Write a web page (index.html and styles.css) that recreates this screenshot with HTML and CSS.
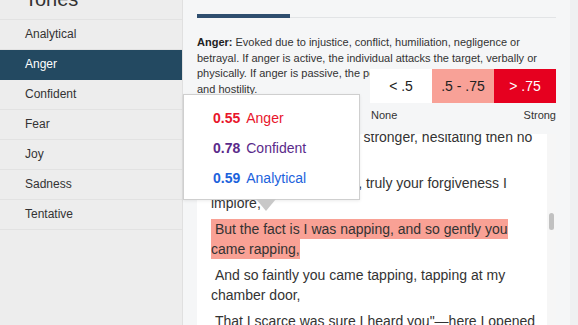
FILE: index.html
```html
<!DOCTYPE html>
<html lang="en">
<head>
  <meta charset="UTF-8">
  <meta name="viewport" content="width=device-width, initial-scale=1.0">
  <title>Tones</title>
  <link rel="stylesheet" href="styles.css">
</head>
<body>
<div class="app">
  <aside class="sidebar">
    <div class="sidebar-title"><h2>Tones</h2></div>
    <ul class="tone-list">
      <li>Analytical</li>
      <li class="active">Anger</li>
      <li>Confident</li>
      <li>Fear</li>
      <li>Joy</li>
      <li>Sadness</li>
      <li>Tentative</li>
    </ul>
  </aside>

  <main class="main">
    <div class="tabs"><div class="tab-active"></div></div>

    <p class="desc"><b>Anger:</b> Evoked due to injustice, conflict, humiliation, negligence or betrayal. If anger is active, the individual attacks the target, verbally or physically. If anger is passive, the person silently sulks and feels tension and hostility.</p>

    <!-- legend sits over the description -->
    <div class="legend">
      <div class="legend-scale">
        <span class="lv lv-low">&lt; .5</span>
        <span class="lv lv-mid">.5 - .75</span>
        <span class="lv lv-high">&gt; .75</span>
      </div>
      <div class="legend-labels"><span>None</span><span>Strong</span></div>
    </div>

    <div class="reader">
      <div class="reader-text">
        <p>&nbsp;Presently my soul grew stronger, hesitating then no longer,</p>
        <p>&nbsp;"Sir," said I, "or Madam, truly your forgiveness I implore,</p>
        <p><span class="hl">&nbsp;But the fact is I was napping, and so gently you came rapping,</span></p>
        <p>&nbsp;And so faintly you came tapping, tapping at my chamber door,</p>
        <p>&nbsp;That I scarce was sure I heard you"—here I opened wide the door;—</p>
        <p>&nbsp;Darkness there and nothing more.</p>
      </div>
      <div class="scrollbar"><div class="thumb"></div></div>
    </div>

    <div class="tooltip">
      <div class="tip-row anger"><b>0.55</b><span>Anger</span></div>
      <div class="tip-row confident"><b>0.78</b><span>Confident</span></div>
      <div class="tip-row analytical"><b>0.59</b><span>Analytical</span></div>
    </div>
  </main>

  <div class="edge"></div>
</div>
</body>
</html>
```

FILE: styles.css
```css
html, body {
  margin: 0;
  height: 325px;
  overflow: hidden;
}
body {
  font-family: "Liberation Sans", Arial, sans-serif;
  color: #333;
}
.app {
  display: flex;
  height: 325px;
}

/* sidebar */
.sidebar {
  width: 183px;
  flex: none;
  box-sizing: border-box;
  background: #ededed;
  border-right: 1px solid #e0e0e0;
}
.sidebar-title {
  height: 19px;
  overflow: hidden;
}
.sidebar-title h2 {
  margin: -11px 0 0 25px;
  font-size: 20px;
  line-height: 20px;
  font-weight: normal;
  color: #333;
}
.tone-list {
  list-style: none;
  margin: 0;
  padding: 0;
  border-top: 1px solid #e2e2e2;
}
.tone-list li {
  height: 29px;
  line-height: 29px;
  padding-left: 25px;
  font-size: 12px;
  border-bottom: 1px solid #e2e2e2;
}
.tone-list li.active {
  background: #234961;
  border-bottom-color: #234961;
  color: #fff;
}

/* main */
.main {
  flex: 1;
  min-width: 0;
  position: relative;
  display: flex;
  flex-direction: column;
  padding: 0 14px;
  background: #f5f6f7;
}
.tabs {
  height: 17px;
  flex: none;
  display: flex;
  align-items: flex-end;
  border-bottom: 1px solid #e2e4e6;
}
.tab-active {
  width: 93px;
  height: 4px;
  margin-bottom: -1px;
  background: #2f4e6f;
}
.desc {
  margin: 17px 0 0;
  font-size: 11px;
  line-height: 15.5px;
  color: #333;
}
.desc b {
  color: #222;
}

.legend {
  position: absolute;
  top: 69px;
  right: 14px;
  width: 186px;
}
.legend-scale {
  display: flex;
}
.lv {
  flex: 1;
  height: 34px;
  display: flex;
  align-items: center;
  justify-content: center;
  font-size: 14px;
  color: #222;
}
.lv-low { background: #fff; }
.lv-mid { background: #f8a197; }
.lv-high { background: #e6001f; color: #fff; }
.legend-labels {
  display: flex;
  justify-content: space-between;
  margin-top: 6px;
  padding-left: 1px;
  font-size: 11px;
  color: #333;
}

.reader {
  flex: 1;
  min-height: 0;
  display: flex;
  margin-top: 37px;
  background: #fff;
  overflow: hidden;
}
.reader-text {
  flex: 1;
  padding: 0 11px 0 14px;
  font-size: 14px;
  line-height: 20px;
  color: #333;
}
.reader-text p {
  margin: 0 0 6px;
}
.reader-text p:first-child {
  margin-top: -7px;
}
.hl {
  background: #f9a195;
  padding: 2px 0;
}
.scrollbar {
  width: 9px;
  flex: none;
  background: #f6f6f6;
}
.thumb {
  width: 5px;
  height: 17px;
  margin: 79px 0 0 2px;
  border-radius: 3px;
  background: #c1c1c1;
}

.tooltip {
  position: absolute;
  left: 0;
  top: 94px;
  width: 177px;
  height: 106px;
  box-sizing: border-box;
  padding: 8px 0 0 29px;
  background: #fff;
  border: 1px solid #cfcfcf;
  box-shadow: 0 1px 3px rgba(0, 0, 0, 0.08);
}
.tooltip::after {
  content: "";
  position: absolute;
  left: 72px;
  top: 100%;
  border-left: 10px solid transparent;
  border-right: 10px solid transparent;
  border-top: 12px solid #c8c8c8;
}
.tip-row {
  height: 30px;
  display: flex;
  align-items: center;
  gap: 6px;
  font-size: 14px;
}
.anger { color: #e8152b; }
.confident { color: #5a2a8a; }
.analytical { color: #1c62dc; }

.edge {
  width: 8px;
  flex: none;
  background: #eff0f1;
}
```
